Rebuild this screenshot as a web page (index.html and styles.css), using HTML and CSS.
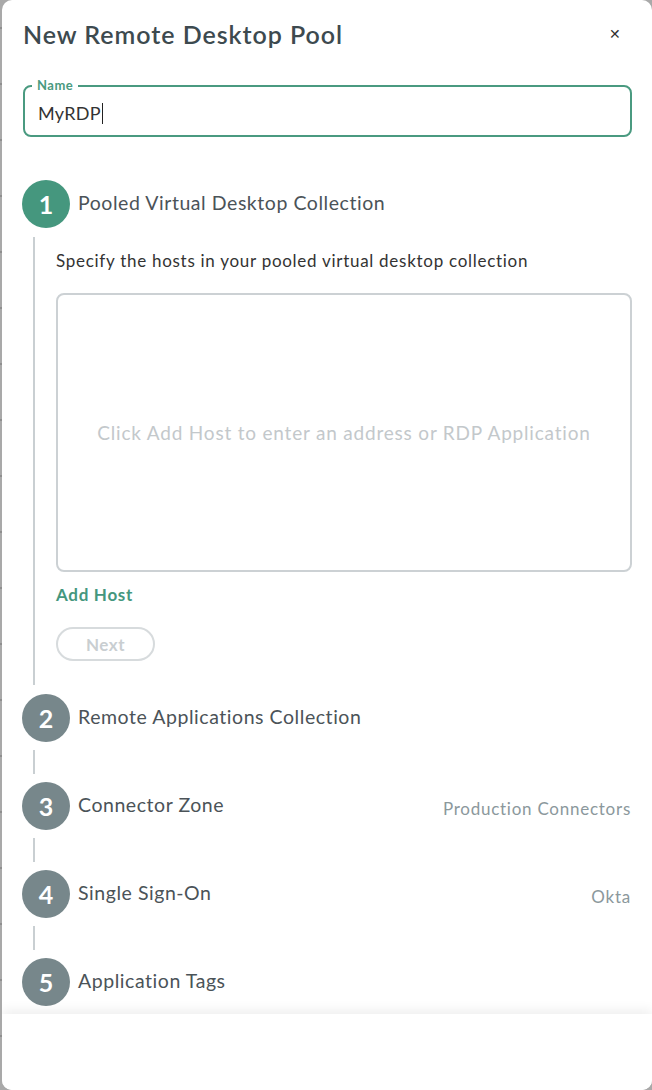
FILE: index.html
```html
<!DOCTYPE html>
<html>
<head>
<meta charset="utf-8">
<link rel="stylesheet" href="styles.css">
</head>
<body>
<div class="modal">
  <div class="modal-head">
    <h1 class="title">New Remote Desktop Pool</h1>
    <span class="close">&#x2715;</span>
  </div>
  <div class="modal-body">
    <div class="field">
      <span class="field-label">Name</span>
      <span class="field-value">MyRDP<span class="caret"></span></span>
    </div>

    <div class="steps">
      <div class="step">
        <div class="step-head">
          <span class="num active">1</span>
          <span class="step-title">Pooled Virtual Desktop Collection</span>
        </div>
        <div class="step-body">
          <p class="desc">Specify the hosts in your pooled virtual desktop collection</p>
          <div class="hosts">Click Add Host to enter an address or RDP Application</div>
          <a class="add-host">Add Host</a>
          <button class="next">Next</button>
        </div>
      </div>
      <div class="step">
        <div class="step-head">
          <span class="num">2</span>
          <span class="step-title">Remote Applications Collection</span>
        </div>
        <div class="connector"></div>
      </div>
      <div class="step">
        <div class="step-head">
          <span class="num">3</span>
          <span class="step-title">Connector Zone</span>
          <span class="step-value">Production Connectors</span>
        </div>
        <div class="connector"></div>
      </div>
      <div class="step">
        <div class="step-head">
          <span class="num">4</span>
          <span class="step-title">Single Sign-On</span>
          <span class="step-value">Okta</span>
        </div>
        <div class="connector"></div>
      </div>
      <div class="step">
        <div class="step-head">
          <span class="num">5</span>
          <span class="step-title">Application Tags</span>
        </div>
      </div>
    </div>
  </div>
  <div class="modal-foot"></div>
</div>
</body>
</html>
```
FILE: styles.css
```css
* { box-sizing: border-box; }
html, body { margin: 0; padding: 0; height: 100%; }
body {
  background-color: #a9a9a9;
  background-image: repeating-linear-gradient(to bottom, transparent 0, transparent 27px, #8f8f8f 27px, #8f8f8f 29px, transparent 29px, transparent 56px);
  background-size: 2px 100%;
  background-repeat: no-repeat;
  font-family: "Lato", "Liberation Sans", sans-serif;
  overflow: hidden;
}
.modal {
  margin-left: 2px;
  height: 1090px;
  background: #fff;
  border-radius: 10px;
  display: flex;
  flex-direction: column;
  overflow: hidden;
}
.modal-head {
  display: flex;
  align-items: center;
  justify-content: space-between;
  padding: 17px 31px 0 21px;
  height: 51px;
}
.title {
  margin: 0;
  font-size: 25px;
  line-height: 32px;
  font-weight: 600;
  color: #3d4a4f;
  letter-spacing: 0.95px;
}
.close {
  font-size: 14px;
  color: #333;
  margin-top: -2px;
}
.modal-body {
  flex: 1;
  overflow: hidden;
  padding: 34px 20px 0 21px;
}
.field {
  position: relative;
  height: 52px;
  border: 2px solid #4a9a80;
  border-radius: 8px;
  display: flex;
  align-items: center;
  padding: 4px 13px 0;
}
.field-label {
  position: absolute;
  top: -9px;
  left: 7px;
  padding: 0 5px;
  background: #fff;
  font-size: 13px;
  line-height: 14px;
  font-weight: 700;
  color: #4a9a80;
  letter-spacing: 0.5px;
}
.field-value {
  font-size: 18px;
  color: #333;
  display: flex;
  align-items: center;
  letter-spacing: 0.3px;
}
.caret {
  display: inline-block;
  width: 1.5px;
  height: 21px;
  background: #222;
  margin-left: 1px;
}
.steps { margin: 43px 0 0 -1px; }
.step-head {
  display: flex;
  align-items: center;
  height: 48px;
}
.num {
  width: 48px;
  height: 48px;
  border-radius: 50%;
  background: #77878b;
  color: #fff;
  font-weight: 700;
  font-size: 25px;
  display: flex;
  align-items: center;
  justify-content: center;
  flex: none;
}
.num.active { background: #45977e; }
.step-title {
  margin-left: 8px;
  font-size: 19.5px;
  color: #4b5358;
  flex: 1;
  margin-top: -3px;
  letter-spacing: 0.55px;
}
.step-value {
  font-size: 17px;
  color: #8b989c;
  margin-top: 5px;
  margin-right: 1px;
  letter-spacing: 0.75px;
}
.step-body {
  margin: 9px 0 9px 11px;
  border-left: 2px solid #c9cfd2;
  padding: 13px 0 24px 21px;
}
.desc {
  margin: 0;
  font-size: 17px;
  line-height: 22px;
  color: #333;
  letter-spacing: 0.72px;
}
.hosts {
  margin-top: 21px;
  height: 279px;
  border: 2px solid #ccd1d4;
  border-radius: 8px;
  display: flex;
  align-items: center;
  justify-content: center;
  font-size: 19px;
  color: #c3c8cb;
  letter-spacing: 0.8px;
}
.add-host {
  display: block;
  margin-top: 12px;
  font-size: 17px;
  line-height: 22px;
  font-weight: 700;
  color: #45977e;
  letter-spacing: 0.7px;
}
.next {
  display: block;
  margin-top: 21px;
  width: 99px;
  height: 34px;
  border: 2px solid #d7dbdd;
  border-radius: 17px;
  background: #fff;
  font-family: inherit;
  font-size: 17px;
  font-weight: 700;
  color: #c9ced1;
  padding: 0;
  letter-spacing: 0.5px;
}
.connector {
  margin: 8px 0 8px 11px;
  height: 24px;
  border-left: 2px solid #c9cfd2;
}
.modal-foot {
  height: 76px;
  flex: none;
  background: #fff;
  box-shadow: 0 -5px 10px rgba(0, 0, 0, 0.06);
  position: relative;
}
```
